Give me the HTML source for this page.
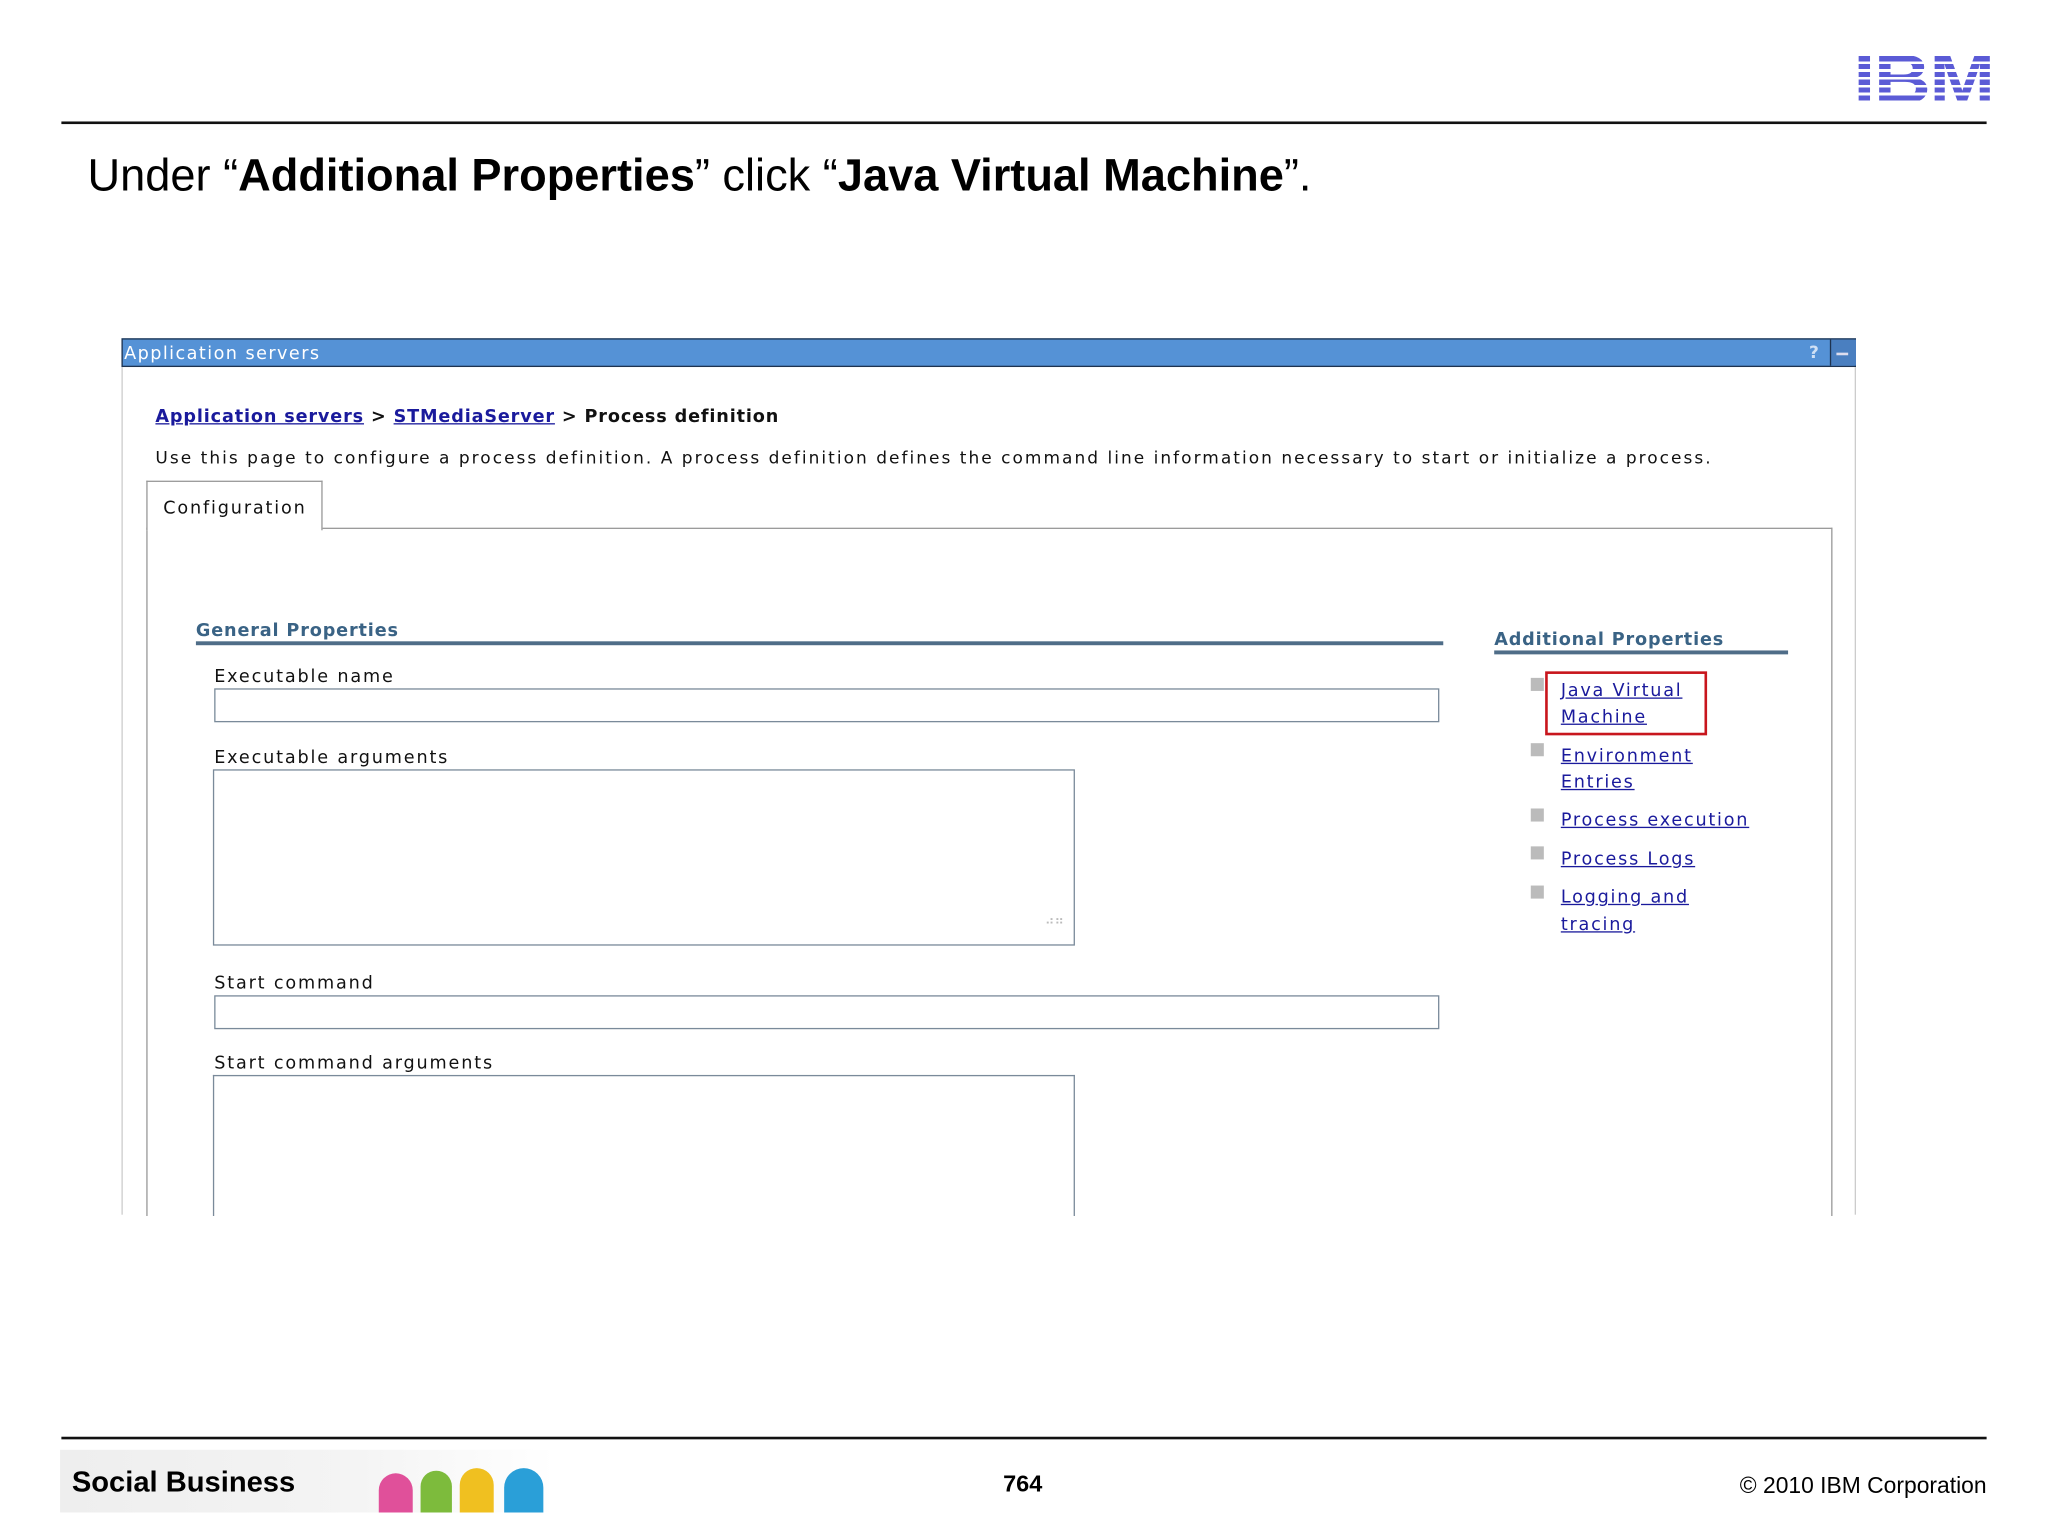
<!DOCTYPE html>
<html><head><meta charset="utf-8"><style>
html,body{margin:0;padding:0;background:#fff;}
#w{width:2048px;height:1536px;overflow:hidden;position:relative;}
#s{position:absolute;left:0;top:0;width:1568px;height:1176px;transform:scale(1.30612);transform-origin:0 0;font-family:"Liberation Sans",sans-serif;}
.a{position:absolute;white-space:nowrap;}
.v{font-family:"DejaVu Sans",sans-serif;font-size:13.5px;color:#111;letter-spacing:1.4px;}
.vb{font-weight:bold;letter-spacing:0.65px;}
.lk{color:#1a1a9c;text-decoration:underline;}
.bul{position:absolute;width:10px;height:10px;background:#bbb;left:1172px;}
.ap{left:1195px;font-family:"DejaVu Sans",sans-serif;font-size:13.5px;color:#1a1a9c;text-decoration:underline;letter-spacing:1.35px;}
</style></head><body><div id="w"><div id="s">
<div class="a" style="left:1419px;top:35px;font:bold 53px/53px 'Liberation Sans',sans-serif;color:#5b5bd6;letter-spacing:-1px;transform:scaleX(1.14);transform-origin:0 0">IBM</div>
<div class="a" style="left:1416px;top:37px;width:110px;height:46px;background:repeating-linear-gradient(to bottom,rgba(255,255,255,0) 0,rgba(255,255,255,0) 4px,#fff 4px,#fff 6px)"></div>
<div class="a" style="left:47px;top:93px;width:1474px;height:2px;background:#111"></div>
<div class="a" style="left:67px;top:116px;font-size:34.6px;color:#000">Under “<b>Additional Properties</b>” click “<b>Java Virtual Machine</b>”.</div>

<div class="a" style="left:93px;top:259px;width:1326px;height:20px;background:#5592d6;border:1px solid #1e3350"></div>
<div class="a v" style="left:95px;top:263px;color:#fff;letter-spacing:1.1px">Application servers</div>
<div class="a" style="left:1385px;top:263px;color:#cfe0f5;font:bold 13px 'DejaVu Sans',sans-serif">?</div>
<div class="a" style="left:1401px;top:260px;width:19px;height:20px;background:#4a7fc0;border-left:1px solid #1e3350"></div>
<div class="a" style="left:1406px;top:270px;width:9px;height:2px;background:#dde"></div>
<div class="a" style="left:93px;top:281px;width:1px;height:649px;background:#ccc"></div>
<div class="a" style="left:1420px;top:281px;width:1px;height:649px;background:#ccc"></div>

<div class="a v vb" style="left:119px;top:311px"><span class="lk">Application servers</span> &gt; <span class="lk">STMediaServer</span> &gt; Process definition</div>
<div class="a v" style="left:119px;top:344px;font-size:13px;letter-spacing:1.55px">Use this page to configure a process definition. A process definition defines the command line information necessary to start or initialize a process.</div>

<div class="a" style="left:112px;top:404px;width:1289px;height:526px;border:1px solid #999;border-bottom:none"></div>
<div class="a" style="left:112px;top:368px;width:133px;height:37px;border:1px solid #999;border-bottom:none;background:#fff"></div>
<div class="a v" style="left:125px;top:381px">Configuration</div>

<div class="a v vb" style="left:150px;top:475px;color:#3a6385">General Properties</div>
<div class="a" style="left:150px;top:491px;width:955px;height:3px;background:#4f6d88"></div>
<div class="a v" style="left:164px;top:510px">Executable name</div>
<div class="a" style="left:164px;top:527px;width:936px;height:24px;border:1px solid #7a8a9a"></div>
<div class="a v" style="left:164px;top:572px">Executable arguments</div>
<div class="a" style="left:163px;top:589px;width:658px;height:133px;border:1px solid #7a8a9a"></div>
<div class="a" style="left:800px;top:700px;color:#bbb;font-size:10px">⠴⠶</div>
<div class="a v" style="left:164px;top:745px">Start command</div>
<div class="a" style="left:164px;top:762px;width:936px;height:24px;border:1px solid #7a8a9a"></div>
<div class="a v" style="left:164px;top:806px">Start command arguments</div>
<div class="a" style="left:163px;top:823px;width:658px;height:107px;border:1px solid #7a8a9a;border-bottom:none"></div>

<div class="a v vb" style="left:1144px;top:482px;color:#3a6385">Additional Properties</div>
<div class="a" style="left:1144px;top:498px;width:225px;height:3px;background:#4f6d88"></div>
<div class="bul" style="top:519px"></div><div class="a ap" style="top:521px">Java Virtual</div><div class="a ap" style="top:541px">Machine</div>
<div class="a" style="left:1183px;top:514px;width:120px;height:45px;border:2px solid #c8161d"></div>
<div class="bul" style="top:569px"></div><div class="a ap" style="top:571px">Environment</div><div class="a ap" style="top:591px">Entries</div>
<div class="bul" style="top:619px"></div><div class="a ap" style="top:620px">Process execution</div>
<div class="bul" style="top:648px"></div><div class="a ap" style="top:650px">Process Logs</div>
<div class="bul" style="top:678px"></div><div class="a ap" style="top:679px">Logging and</div><div class="a ap" style="top:700px">tracing</div>

<div class="a" style="left:47px;top:1100px;width:1474px;height:2px;background:#111"></div>
<div class="a" style="left:46px;top:1110px;width:379px;height:48px;background:linear-gradient(90deg,#eee,#f4f4f4 60%,#fff)"></div>
<div class="a" style="left:290px;top:1128px;width:26px;height:30px;border-radius:13px 13px 0 0;background:#e0509a"></div>
<div class="a" style="left:322px;top:1126px;width:24px;height:32px;border-radius:12px 12px 0 0;background:#7dbb3c"></div>
<div class="a" style="left:352px;top:1124px;width:26px;height:34px;border-radius:13px 13px 0 0;background:#f0c020"></div>
<div class="a" style="left:386px;top:1124px;width:30px;height:34px;border-radius:15px 15px 0 0;background:#2a9fd8"></div>
<div class="a" style="left:55px;top:1122px;font-weight:bold;font-size:22.3px;color:#000">Social Business</div>
<div class="a" style="left:768px;top:1126px;font-weight:bold;font-size:18px">764</div>
<div class="a" style="right:47px;top:1127px;font-size:17.5px">© 2010 IBM Corporation</div>
</div></div></body></html>
